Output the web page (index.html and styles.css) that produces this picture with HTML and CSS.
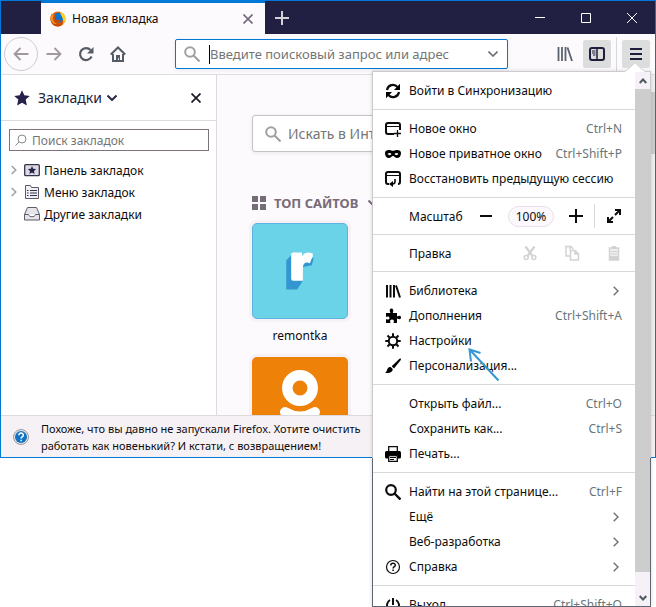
FILE: index.html
```html
<!DOCTYPE html>
<html lang="ru">
<head>
  <meta charset="UTF-8" />
  <meta name="viewport" content="width=device-width, initial-scale=1.0" />
  <title>Новая вкладка</title>
  <link rel="stylesheet" href="styles.css">
</head>
<body>

  <div class="window">
    <header class="titlebar">
      <div class="tab">
        <svg class="icon" viewBox="0 0 16 16">
          <circle cx="8" cy="8" r="7.5" fill="#e66000"/>
          <circle cx="8.500" cy="6.800" r="5" fill="#0a74d0"/>
          <path d="M10 .8c3 1 5.500 3.600 5.500 7.200 0 2.500-1.500 5-3.500 6.300 1.500-2 1.600-4 .9-6C12.500 6 10.500 4 10 .8z" fill="#ffd21e"/>
          <path d="M1.500 3c.8 0 2 .5 2.500 1 1 0 2 .2 2.500.8L4.800 6.500C5 8 6 9 7.500 9c1.300 0 2-.5 3.300.2-1 2-3 2.800-5 2.300C8 13 11 12.500 12.700 10c.3 3-2 5.500-5 5.500C3.500 15.500.5 12 .5 8c0-2 .3-3.500 1-5z" fill="#c94a08"/>
          <path d="M1.500 3c.8 0 2 .5 2.500 1L3 7c0 3 1.500 5 4 6-3.500.5-6-2-6.400-5 0-2 .3-3.500.9-5z" fill="#f39019"/>
        </svg>
        <span class="tab-title">Новая вкладка</span>
        <button class="tab-close" aria-label="Закрыть вкладку">
          <svg viewBox="0 0 10 10"><path d="M.5.5l9 9M9.500.5l-9 9" stroke="#74697a" stroke-width="1.600"/></svg>
        </button>
      </div>
      <button class="tab-new" aria-label="Новая вкладка">
        <svg viewBox="0 0 14 14"><path d="M7 0v14M0 7h14" stroke="#d4d2d6" stroke-width="2"/></svg>
      </button>
      <div class="win-controls">
        <button aria-label="Свернуть"><svg viewBox="0 0 10 10"><path d="M0 4.500h10" stroke="#fff"/></svg></button>
        <button aria-label="Развернуть"><svg viewBox="0 0 10 10"><path d="M.5.5h9v9h-9z" fill="none" stroke="#fff"/></svg></button>
        <button aria-label="Закрыть"><svg viewBox="0 0 10 10"><path d="M0 0l10 10M10 0L0 10" stroke="#fff"/></svg></button>
      </div>
    </header>

    <nav class="toolbar">
      <button class="back" aria-label="Назад">
        <svg class="icon" viewBox="0 0 16 16"><path d="M15.500 8H1.500M7.500 2l-6 6 6 6" fill="none" stroke="#a09aa0" stroke-width="1.800"/></svg>
      </button>
      <button class="tool" aria-label="Вперёд">
        <svg class="icon" viewBox="0 0 16 16"><path d="M.5 8h14M8.500 2l6 6-6 6" fill="none" stroke="#a09aa0" stroke-width="1.800"/></svg>
      </button>
      <button class="tool" aria-label="Обновить">
        <svg class="icon" viewBox="0 0 16 16"><path d="M13.600 10.500A6 6 0 1 1 12.500 4" fill="none" stroke="#545c66" stroke-width="2.200"/><path d="M15.500 1v6.500H9z" fill="#545c66"/></svg>
      </button>
      <button class="tool" aria-label="Домой">
        <svg class="icon" viewBox="0 0 16 16"><path d="M.8 8.500L8 1.500l7.200 7M3 8v7h10V8" fill="none" stroke="#545c66" stroke-width="2"/><path d="M6 9h4v6H8.800v-3H8v3H6z" fill="#545c66"/></svg>
      </button>
      <div class="urlbar">
        <svg class="icon" viewBox="0 0 16 16"><circle cx="6" cy="6" r="4.800" fill="none" stroke="#a09fa0" stroke-width="2"/><path d="M9.500 9.500l6 6" stroke="#a09fa0" stroke-width="2"/></svg>
        <span class="caret"></span>
        <input type="text" aria-label="Адрес" placeholder="Введите поисковый запрос или адрес">
        <svg class="chevron" viewBox="0 0 10 6"><path d="M.5.5L5 5 9.500.5" fill="none" stroke="#696f76" stroke-width="1.600"/></svg>
      </div>
      <button class="tool" aria-label="Библиотека">
        <svg class="icon" viewBox="0 0 16 16"><path d="M1.500 1v14M5 1v14M8.500 1v14M10.500 1.500L15 15" stroke="#5b626b" stroke-width="1.800"/></svg>
      </button>
      <button class="tool active" aria-label="Боковая панель">
        <svg class="icon" viewBox="0 0 16 16"><rect x="1" y="2" width="14" height="12" rx="2" fill="none" stroke="#1f1c3c" stroke-width="2"/><path d="M8 2v12" stroke="#1f1c3c" stroke-width="1.500"/><path d="M3 5h3.500M3 7h3.500M4 9h2.500" stroke="#1f1c3c"/></svg>
      </button>
      <span class="tool-line"></span>
      <button class="tool active" aria-label="Меню">
        <svg class="icon" viewBox="0 0 16 16"><path d="M2 3h12M2 8h12M2 13h12" stroke="#1f1c3c" stroke-width="2"/></svg>
      </button>
    </nav>

    <main class="main">
      <aside class="sidebar">
        <div class="sidebar-head">
          <svg class="icon" viewBox="0 0 16 16"><path d="M8 .3l2.300 5 5.500.6-4.100 3.700 1.200 5.900L8 12.700l-4.900 2.800 1.200-5.900L.2 5.900l5.500-.6z" fill="#24224a"/></svg>
          <span class="sidebar-title">Закладки</span>
          <svg class="chevron" viewBox="0 0 10 6"><path d="M.5.5L5 5 9.500.5" fill="none" stroke="#2b2945" stroke-width="2"/></svg>
          <button class="sidebar-close" aria-label="Закрыть боковую панель">
            <svg viewBox="0 0 10 10"><path d="M.5.5l9 9M9.500.5l-9 9" stroke="#1b1b28" stroke-width="1.700"/></svg>
          </button>
        </div>
        <div class="sidebar-body">
          <div class="bm-search">
            <svg viewBox="0 0 12 12"><circle cx="7" cy="5" r="4" fill="none" stroke="#8a8a8a"/><path d="M4 8L.5 11.500" stroke="#8a8a8a"/></svg>
            <input type="text" aria-label="Поиск закладок" placeholder="Поиск закладок">
          </div>
          <ul class="tree">
            <li>
              <svg class="twisty" viewBox="0 0 6 10"><path d="M.7 1l4 4-4 4" fill="none" stroke="#a3a3a3" stroke-width="1.600"/></svg>
              <svg class="icon" viewBox="0 0 16 16"><rect x=".7" y="2.700" width="14.600" height="11" rx="1" fill="#dcdae2" stroke="#35324f" stroke-width="1.300"/><path d="M8 4l1.200 2.700 3 .3-2.200 2 .6 3L8 10.400 5.400 12 6 9 3.800 7l3-.3z" fill="#24224a"/></svg>
              <span>Панель закладок</span>
            </li>
            <li>
              <svg class="twisty" viewBox="0 0 6 10"><path d="M.7 1l4 4-4 4" fill="none" stroke="#a3a3a3" stroke-width="1.600"/></svg>
              <svg class="icon" viewBox="0 0 16 16"><path d="M1.500 1.500h5l1 2h7v11h-13z" fill="#f1eff3" stroke="#5a5a6c"/><path d="M6 6.500h7M6 9h7M6 11.500h7M3 6.500h1.500M3 9h1.500M3 11.500h1.500" stroke="#35324f"/></svg>
              <span>Меню закладок</span>
            </li>
            <li>
              <span class="twisty"></span>
              <svg class="icon" viewBox="0 0 16 16"><path d="M.5 8.500L3.500 1.500h9l3 7v5.500H.5z" fill="#e6e4e9" stroke="#5a5a6c"/><path d="M.5 8.500h4c.5 3 6.500 3 7 0h4" fill="#fff" stroke="#5a5a6c"/></svg>
              <span>Другие закладки</span>
            </li>
          </ul>
        </div>
      </aside>

      <section class="newtab">
        <div class="web-search">
          <svg class="icon" viewBox="0 0 16 16"><circle cx="6" cy="6" r="4.800" fill="none" stroke="#a09fa0" stroke-width="2"/><path d="M9.500 9.500l6 6" stroke="#a09fa0" stroke-width="2"/></svg>
          <input type="text" aria-label="Искать в Интернете" placeholder="Искать в Интернете">
        </div>
        <h2 class="section-title">
          <svg viewBox="0 0 14 14"><path d="M0 0h6v6H0zM8 0h6v6H8zM0 8h6v6H0zM8 8h6v6H8z" fill="#756c77"/></svg>
          <span>ТОП САЙТОВ</span>
          <svg class="chevron" viewBox="0 0 10 6"><path d="M.5.5L5 5 9.500.5" fill="none" stroke="#756c77" stroke-width="2"/></svg>
        </h2>
        <a class="site" href="#">
          <span class="tile tile-blue">
            <svg viewBox="0 0 96 96">
              <path d="M40 31l-6 6v30h11l6-9V44l9-2 2-7z" fill="#3396d0"/>
              <path d="M39 31q0-2 2-2h9v4c2-4 6-5 11-3v3l-3 7c-5-2-7 1-7 5v13H41q-2 0-2-2z" fill="#fff"/>
            </svg>
          </span>
          <span class="site-name">remontka</span>
        </a>
        <a class="site" href="#">
          <span class="tile tile-orange">
            <svg viewBox="0 0 96 96">
              <circle cx="48" cy="31" r="12.700" fill="none" stroke="#fff" stroke-width="10.500"/>
              <path d="M33 55q15 9 30 0M48 60L35 76M48 60l13 16" fill="none" stroke="#fff" stroke-width="10" stroke-linecap="round"/>
            </svg>
          </span>
        </a>
      </section>
      <div class="page-scroll"><span></span></div>
    </main>

    <footer class="notice">
      <svg class="icon" viewBox="0 0 16 16"><circle cx="8" cy="8" r="7.500" fill="#e6e6e6" stroke="#9a9a9a"/><circle cx="8" cy="8" r="6" fill="#1273c6"/><path d="M5.800 6.300c0-3 4.600-2.800 4.500-.1 0 1.600-2.200 1.600-2.200 3.300M8.100 10.800v1.500" fill="none" stroke="#fff" stroke-width="1.500"/></svg>
      <p>Похоже, что вы давно не запускали Firefox. Хотите очистить<br>работать как новенький? И кстати, с возвращением!</p>
    </footer>
  </div>

  <div class="menu">
    <svg class="menu-arrow" viewBox="0 0 20 10"><path d="M0 10L10 .5 20 10z" fill="#fff"/><path d="M1 9L10 .7 19 9" fill="none" stroke="#d0ced0"/></svg>
    <div class="menu-list">
      <div class="group">
        <button class="item">
          <svg class="icon" viewBox="0 0 16 16"><path d="M2 7a6 6 0 0 1 10.500-3M14 9a6 6 0 0 1-10.500 3" fill="none" stroke="#0c0c0d" stroke-width="2.200"/><path d="M15 .8V7H9zM1 15.200V9h6z"/></svg>
          <span>Войти в Синхронизацию</span>
        </button>
      </div>
      <div class="group">
        <button class="item">
          <svg class="icon" viewBox="0 0 16 16"><path d="M9 13H3a2 2 0 0 1-2-2V4a2 2 0 0 1 2-2h10a2 2 0 0 1 2 2v5" fill="none" stroke="#0c0c0d" stroke-width="2"/><path d="M1 5.500h14" stroke="#0c0c0d"/><path d="M12.500 9v7M9 12.500h7" stroke="#0c0c0d" stroke-width="1.300"/></svg>
          <span>Новое окно</span><kbd>Ctrl+N</kbd>
        </button>
        <button class="item">
          <svg class="icon" viewBox="0 0 16 16"><path fill-rule="evenodd" d="M0 7c0-2 1.500-3 4-3 2 0 2.500.8 4 .8S10 4 12 4c2.500 0 4 1 4 3 0 3-1.500 5-4 5-2 0-2.700-2-4-2s-2 2-4 2c-2.500 0-4-2-4-5zm2.500 1c1.500 1.500 3 1.500 4 0-1-1.500-3-1.500-4 0zm7 0c1 1.500 2.500 1.500 4 0-1-1.500-3-1.500-4 0z"/></svg>
          <span>Новое приватное окно</span><kbd>Ctrl+Shift+P</kbd>
        </button>
        <button class="item">
          <svg class="icon" viewBox="0 0 16 16"><path d="M4 13H3a2 2 0 0 1-2-2V3a2 2 0 0 1 2-2h10a2 2 0 0 1 2 2v8a2 2 0 0 1-2 2" fill="none" stroke="#0c0c0d" stroke-width="2"/><path d="M1 4.500h14" stroke="#0c0c0d"/><path d="M10 8v2.500q0 2.500-2.500 2.500H6" fill="none" stroke="#0c0c0d" stroke-width="1.600"/><path d="M8 10v6l-4-3z"/></svg>
          <span>Восстановить предыдущую сессию</span>
        </button>
      </div>
      <div class="strip">
        <span class="strip-label">Масштаб</span>
        <button class="zoom-out" aria-label="Уменьшить"><svg class="icon" viewBox="0 0 16 16"><path d="M2 8h12" stroke="#0c0c0d" stroke-width="2"/></svg></button>
        <button class="zoom-value">100%</button>
        <button class="zoom-in" aria-label="Увеличить"><svg class="icon" viewBox="0 0 16 16"><path d="M1 8h14M8 1v14" stroke="#0c0c0d" stroke-width="2"/></svg></button>
        <button class="fullscreen" aria-label="Полный экран"><svg class="icon" viewBox="0 0 16 16"><path d="M9 2h5v5M7 14H2V9M2.500 13.500L7 9M9 7l4.500-4.500" fill="none" stroke="#0c0c0d" stroke-width="2"/></svg></button>
      </div>
      <div class="strip">
        <span class="strip-label">Правка</span>
        <div class="edit">
          <button aria-label="Вырезать" disabled><svg class="icon" viewBox="0 0 16 16"><path d="M3.500 1.500l7 9.500M12.500 1.500l-7 9.500" stroke="#d2d2d4" stroke-width="2.200"/><circle cx="4.200" cy="12.500" r="2" fill="none" stroke="#d2d2d4" stroke-width="1.500"/><circle cx="11.800" cy="12.500" r="2" fill="none" stroke="#d2d2d4" stroke-width="1.500"/></svg></button>
          <button aria-label="Копировать" disabled><svg class="icon" viewBox="0 0 16 16"><path d="M6 11H2V1.500h5L9.500 4M6.500 5.500h4.500l3.500 3.500v6h-8zM6 2v3M11 6v3h3" fill="none" stroke="#d2d2d4" stroke-width="1.500"/></svg></button>
          <button aria-label="Вставить" disabled><svg class="icon" viewBox="0 0 16 16"><path d="M3.500 3h9v12h-9z" fill="#eee" stroke="#d2d2d4" stroke-width="1.500"/><path d="M6 1h4v3H6zM3 11h10v4H3z" fill="#d2d2d4"/><path d="M5 6.500h6M5 9h6" stroke="#d2d2d4"/></svg></button>
        </div>
      </div>
      <div class="group">
        <button class="item">
          <svg class="icon" viewBox="0 0 16 16"><path d="M2 2v12.500M5.500 2v12.500M9 2v12.500M11 2.500L15 14.500" stroke="#0c0c0d" stroke-width="2"/></svg>
          <span>Библиотека</span><svg class="arrow" viewBox="0 0 6 10"><path d="M.7.7L5 5 .7 9.300" fill="none" stroke="#756c77" stroke-width="1.400"/></svg>
        </button>
        <button class="item">
          <svg class="icon" viewBox="0 0 16 16"><path d="M1 5h4.500C4 2 5 .5 6.500.5S9 2 7.800 5H12v3.500c3-1.500 4-.5 4 1s-1 2.500-4 1V15H8.500c1-2.500 0-3.500-1.500-3.500S4.500 12.500 5.500 15H1v-4c2 1 3.500.5 3.500-1S3 8 1 9z"/></svg>
          <span>Дополнения</span><kbd>Ctrl+Shift+A</kbd>
        </button>
        <button class="item">
          <svg class="icon" viewBox="0 0 16 16"><circle cx="8" cy="8" r="4.200" fill="none" stroke="#0c0c0d" stroke-width="2"/><path d="M8 .3v3M8 12.700v3M.3 8h3M12.700 8h3M2.500 2.500l2.200 2.200M11.300 11.300l2.200 2.200M13.500 2.500l-2.200 2.200M4.700 11.300l-2.200 2.200" stroke="#0c0c0d" stroke-width="2"/></svg>
          <span>Настройки</span>
        </button>
        <button class="item">
          <svg class="icon" viewBox="0 0 16 16"><path d="M15.800.7c.3.500.2 1-.2 1.500L9 10.500 6.700 8.200 14.500.8c.5-.4 1-.4 1.300-.1zM5.700 9l2 2c.2 3-3 4.500-7.700 4 2-1 1.500-3 3-5q1-1.300 2.700-1z"/></svg>
          <span>Персонализация...</span>
        </button>
      </div>
      <div class="group">
        <button class="item"><span class="icon"></span><span>Открыть файл...</span><kbd>Ctrl+O</kbd></button>
        <button class="item"><span class="icon"></span><span>Сохранить как...</span><kbd>Ctrl+S</kbd></button>
        <button class="item">
          <svg class="icon" viewBox="0 0 16 16"><path d="M3.700 5V.7h8.600V5" fill="#fff" stroke="#0c0c0d" stroke-width="1.300"/><rect y="5" width="16" height="7.500" rx="1.500"/><path d="M3.700 9.500h8.600v5.800H3.700z" fill="#fff" stroke="#0c0c0d" stroke-width="1.300"/><path d="M5 11.500h6M5 13.500h4" stroke="#0c0c0d"/></svg>
          <span>Печать...</span>
        </button>
      </div>
      <div class="group">
        <button class="item">
          <svg class="icon" viewBox="0 0 16 16"><circle cx="6" cy="6" r="4.800" fill="none" stroke="#0c0c0d" stroke-width="2.200"/><path d="M9.500 9.500l6 6" stroke="#0c0c0d" stroke-width="2.400"/></svg>
          <span>Найти на этой странице...</span><kbd>Ctrl+F</kbd>
        </button>
        <button class="item"><span class="icon"></span><span>Ещё</span><svg class="arrow" viewBox="0 0 6 10"><path d="M.7.7L5 5 .7 9.300" fill="none" stroke="#756c77" stroke-width="1.400"/></svg></button>
        <button class="item"><span class="icon"></span><span>Веб-разработка</span><svg class="arrow" viewBox="0 0 6 10"><path d="M.7.7L5 5 .7 9.300" fill="none" stroke="#756c77" stroke-width="1.400"/></svg></button>
        <button class="item">
          <svg class="icon" viewBox="0 0 16 16"><circle cx="8" cy="8" r="6.500" fill="none" stroke="#0c0c0d" stroke-width="1.200"/><path d="M5.800 6.500c0-3 4.600-2.800 4.500-.3 0 1.500-2.200 1.500-2.200 3.300M8.100 10.500V12" fill="none" stroke="#0c0c0d" stroke-width="1.500"/></svg>
          <span>Справка</span><svg class="arrow" viewBox="0 0 6 10"><path d="M.7.7L5 5 .7 9.300" fill="none" stroke="#756c77" stroke-width="1.400"/></svg>
        </button>
      </div>
      <div class="group">
        <button class="item">
          <svg class="icon" viewBox="0 0 16 16"><path d="M5 3a6 6 0 1 0 6 0M8 1v7" fill="none" stroke="#0c0c0d" stroke-width="2"/></svg>
          <span>Выход</span><kbd>Ctrl+Shift+Q</kbd>
        </button>
      </div>
    </div>
    <div class="menu-scroll">
      <svg viewBox="0 0 8 6"><path d="M.7 5L4 1.500 7.300 5" fill="none" stroke="#505862" stroke-width="2"/></svg>
      <span class="thumb"></span>
      <svg viewBox="0 0 8 6"><path d="M.7 1L4 4.500 7.300 1" fill="none" stroke="#505862" stroke-width="2"/></svg>
    </div>
    <!-- pointer to the settings item -->
    <svg class="pointer" viewBox="0 0 32 34"><path d="M30.500 32.500L2 2M12.500 5L1.500 1.500 3 13.500" fill="none" stroke="#3597d3" stroke-width="2"/></svg>
  </div>

</body>
</html>
```
FILE: styles.css
```css
* { box-sizing: border-box; }
body {
  margin: 0;
  height: 100vh;
  overflow: hidden;
  position: relative;
  background: #fff;
  color: #0c0c0d;
  font-family: 'Noto Sans', 'Open Sans', sans-serif;
  font-size: 12px;
  line-height: 17px;
}
button, input {
  font: inherit;
  color: inherit;
  background: none;
  border: 0;
  padding: 0;
  margin: 0;
}
button {
  display: flex;
  align-items: center;
  justify-content: center;
}
input { flex: 1; min-width: 0; outline: none; }
svg { display: block; flex: none; }
.icon { width: 16px; height: 16px; flex: none; }
.chevron { width: 10px; height: 6px; }

.window {
  height: calc(100vh - 149px);
  display: flex;
  flex-direction: column;
  border: 1px solid #0078d7;
  background: #fdfafe;
}

/* title bar */
.titlebar {
  flex: none;
  display: flex;
  height: 33px;
  padding-left: 40px;
  background: #211f42;
}
.tab {
  width: 224px;
  display: flex;
  align-items: center;
  gap: 6px;
  padding: 0 12px 0 9px;
  background: #fdfafe;
  border-top: 2px solid #0078d7;
}
.tab-title { flex: 1; }
.tab-close svg, .win-controls svg, .sidebar-close svg { width: 10px; height: 10px; }
.tab-new { width: 34px; }
.tab-new svg { width: 14px; height: 14px; }
.win-controls { display: flex; margin-left: auto; }
.win-controls button { width: 46px; }

/* toolbar */
.toolbar {
  flex: none;
  display: flex;
  align-items: center;
  gap: 4px;
  height: 41px;
  padding: 0 5px 0 3px;
  border-bottom: 1px solid #e0dde0;
}
.back {
  width: 34px;
  height: 34px;
  border: 1px solid #cfccd0;
  border-radius: 50%;
  margin-right: -2px;
}
.tool {
  width: 28px;
  height: 28px;
  border-radius: 2px;
}
.tool.active { background: #dcdddd; }
.tool-line { width: 1px; height: 34px; margin: 0 1px; background: #d8d8da; }
.urlbar {
  flex: 1;
  display: flex;
  align-items: center;
  height: 30px;
  margin: 0 39px;
  padding: 0 9px 0 8px;
  background: #fff;
  border: 1px solid #0078d7;
  border-radius: 2px;
  box-shadow: 0 1px 4px rgba(0,0,0,0.08);
  font-size: 13px;
}
.caret { width: 1px; height: 19px; margin-left: 9px; background: #000; }
::placeholder { color: #757575; opacity: 1; }

/* sidebar */
.main { flex: 1; min-height: 0; display: flex; }
.sidebar {
  flex: none;
  width: 216px;
  background: #fff;
  border-right: 1px solid #dcdadc;
}
.sidebar-head {
  display: flex;
  align-items: center;
  height: 46px;
  padding: 0 15px 0 13px;
  border-bottom: 1px solid #dcdadc;
}
.sidebar-title { margin: 0 5px 0 8px; font-size: 14px; line-height: 20px; color: #1f1c3c; }
.sidebar-close { margin-left: auto; }
.sidebar-body { padding: 8px; }
.bm-search {
  display: flex;
  align-items: center;
  gap: 5px;
  height: 22px;
  margin-right: -1px;
  padding: 0 5px;
  border: 1px solid #7b727c;
}
.bm-search svg { width: 12px; height: 12px; }
.tree { list-style: none; margin: 8px 0 0; padding: 0; }
.tree li { display: flex; align-items: center; gap: 4px; height: 22px; }
.twisty { width: 6px; height: 10px; margin: 0 5px 0 2px; }
.tree li .icon { margin-left: -2px; }

/* new tab page */
.newtab {
  flex: 1;
  overflow: hidden;
  padding: 40px 35px 0;
}
.web-search {
  display: flex;
  align-items: center;
  gap: 7px;
  height: 37px;
  padding: 0 12px;
  background: #fff;
  border: 1px solid #c6c3c6;
  border-radius: 3px;
  box-shadow: 0 1px 4px rgba(0,0,0,0.08);
  font-size: 14px;
}
.section-title {
  display: flex;
  align-items: center;
  gap: 8px;
  margin: 42px 0 11px;
  font-size: 13px;
  line-height: 18px;
  color: #756c77;
}
.section-title svg:first-child { width: 14px; height: 14px; }
.section-title .chevron { margin-left: 2px; }
.site {
  display: block;
  width: 96px;
  margin-bottom: 13px;
  color: #0c0c0d;
  text-align: center;
  text-decoration: none;
}
.tile {
  display: block;
  height: 96px;
  border-radius: 5px;
  box-shadow: 0 0 0 3px #f5f1f6;
  overflow: hidden;
}
.tile-blue { background: #6ad3e8; border: 1px solid #5db3df; }
.tile-orange { background: #ee8208; }
.site-name { display: block; margin-top: 8px; }
.page-scroll { width: 17px; padding-top: 17px; background: #f0eff0; }
.page-scroll span { display: block; height: 62px; background: #cdcdcd; }

/* notification bar */
.notice {
  flex: none;
  display: flex;
  align-items: center;
  gap: 12px;
  padding: 4px 12px 3px;
  background: #f6f1f5;
  border-top: 1px solid #dcdadc;
}
.notice p { margin: 0; font-size: 11px; white-space: nowrap; }

/* main menu */
.menu {
  position: absolute;
  top: 71px;
  bottom: 0;
  right: 5px;
  width: 279px;
  display: flex;
  background: #fff;
  border: 1px solid;
  border-image: linear-gradient(#cccacc 387px, #5d6672 387px) 1;
  box-shadow: 0 0 4px rgba(0,0,0,0.15);
}
.menu-arrow {
  position: absolute;
  top: -10px;
  right: 5px;
  width: 20px;
  height: 10px;
}
.menu-list { flex: 1; overflow: hidden; }
.group { padding: 6px 0; border-bottom: 1px solid #d8d8da; }
.item {
  width: 100%;
  height: 25px;
  gap: 8px;
  padding: 0 13px 0 12px;
  justify-content: flex-start;
  white-space: nowrap;
}
.item kbd { margin-left: auto; font: inherit; color: #687679; }
.arrow { width: 6px; height: 10px; margin: 0 3px 0 auto; }
.strip {
  display: flex;
  align-items: center;
  height: 37px;
  padding: 0 13px 0 36px;
  border-bottom: 1px solid #d8d8da;
}
.strip-label { flex: 1; }
.zoom-value {
  width: 46px;
  height: 21px;
  margin: 0 14px;
  border: 1px solid #e6dfe7;
  border-radius: 11px;
  background: #fcf8fd;
}
.fullscreen { height: 24px; margin-left: 10px; padding-left: 11px; border-left: 1px solid #d8d8da; }
.edit { display: flex; gap: 26px; }
.menu-scroll {
  flex: none;
  width: 15px;
  display: flex;
  flex-direction: column;
  align-items: center;
  padding-top: 6px;
  padding-bottom: 5px;
  gap: 5px;
  background: #f5f1f6;
}
.menu-scroll svg { width: 8px; height: 6px; }
.thumb { flex: 1; width: 15px; margin-bottom: 18px; background: #cdcdcd; }
.pointer {
  position: absolute;
  top: 276px;
  left: 95px;
  width: 32px;
  height: 34px;
}
```
